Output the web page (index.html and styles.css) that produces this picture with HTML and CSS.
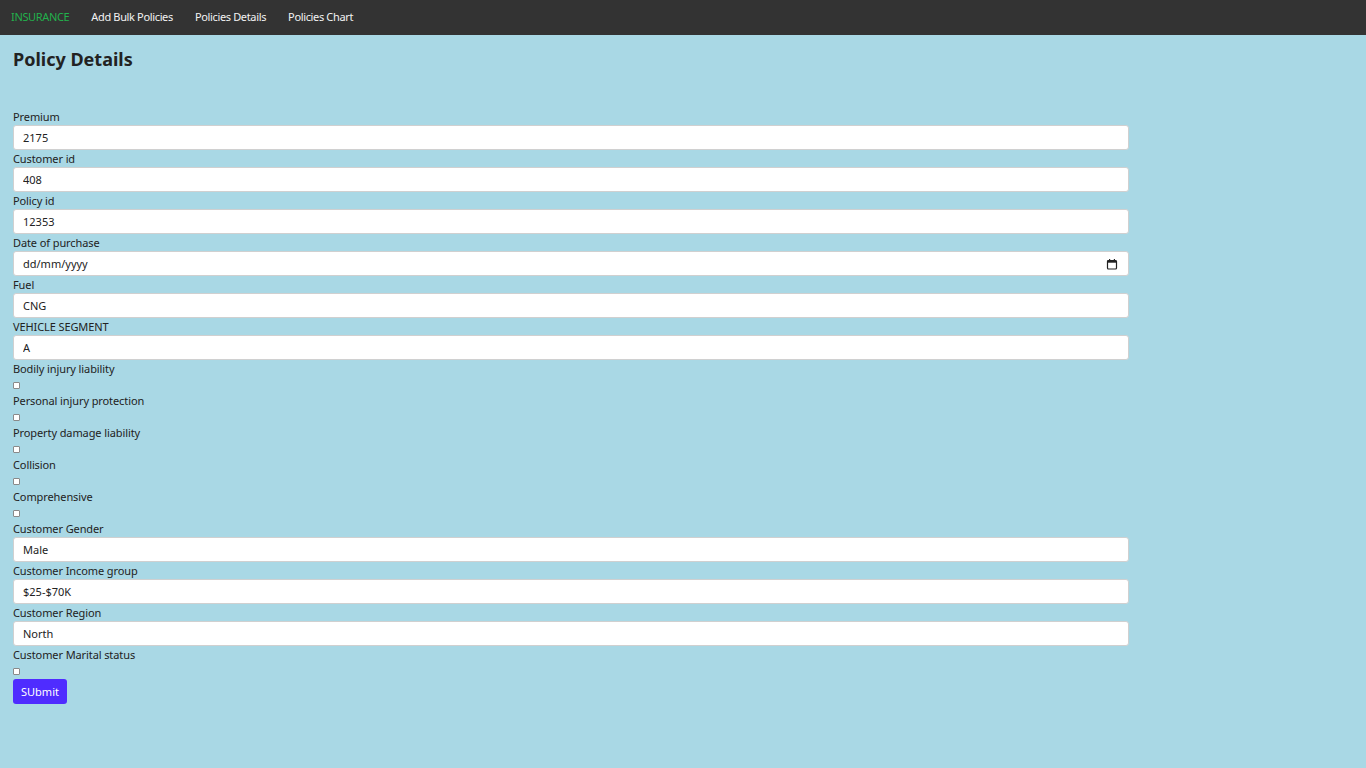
FILE: index.html
```html
<!DOCTYPE html>
<html>
<head>
<meta charset="utf-8">
<title>Policy Details</title>
<link rel="stylesheet" href="styles.css">
</head>
<body>
<nav class="navbar">
  <a class="brand" href="#">INSURANCE</a>
  <a class="nav-link" href="#">Add Bulk Policies</a>
  <a class="nav-link" href="#">Policies Details</a>
  <a class="nav-link" href="#">Policies Chart</a>
</nav>
<main class="page">
  <h1 class="title">Policy Details</h1>
  <form class="form">
    <div class="group"><label>Premium</label><input class="field" type="text" value="2175"></div>
    <div class="group"><label>Customer id</label><input class="field" type="text" value="408"></div>
    <div class="group"><label>Policy id</label><input class="field" type="text" value="12353"></div>
    <div class="group"><label>Date of purchase</label>
      <div class="field date"><span>dd/mm/yyyy</span>
        <svg width="12" height="12" viewBox="0 0 12 12"><rect x="1.5" y="2.5" width="9" height="8.5" rx="1" fill="none" stroke="#222" stroke-width="1.2"/><rect x="1.5" y="2.5" width="9" height="2.2" fill="#222"/><rect x="3" y="1" width="1.2" height="2" fill="#222"/><rect x="7.8" y="1" width="1.2" height="2" fill="#222"/></svg>
      </div>
    </div>
    <div class="group"><label>Fuel</label><input class="field" type="text" value="CNG"></div>
    <div class="group"><label>VEHICLE SEGMENT</label><input class="field" type="text" value="A"></div>
    <div class="group check"><label>Bodily injury liability</label><span class="box"></span></div>
    <div class="group check"><label>Personal injury protection</label><span class="box"></span></div>
    <div class="group check"><label>Property damage liability</label><span class="box"></span></div>
    <div class="group check"><label>Collision</label><span class="box"></span></div>
    <div class="group check"><label>Comprehensive</label><span class="box"></span></div>
    <div class="group"><label>Customer Gender</label><input class="field" type="text" value="Male"></div>
    <div class="group"><label>Customer Income group</label><input class="field" type="text" value="$25-$70K"></div>
    <div class="group"><label>Customer Region</label><input class="field" type="text" value="North"></div>
    <div class="group check"><label>Customer Marital status</label><span class="box"></span></div>
    <button class="submit" type="button">SUbmit</button>
  </form>
</main>
</body>
</html>
```
FILE: styles.css
```css
* { box-sizing: border-box; }
html, body { margin: 0; padding: 0; }
body {
  background: #a9d8e5;
  font-family: "Noto Sans", "Open Sans", sans-serif;
  color: #222;
  min-height: 768px;
}
.navbar {
  height: 35px;
  background: #333333;
  display: flex;
  align-items: center;
  padding-left: 11px;
  padding-bottom: 2px;
  gap: 22px;
}
.navbar a {
  text-decoration: none;
  font-size: 11px;
  color: #f2f2f2;
  letter-spacing: -0.35px;
}
.navbar .brand { color: #22b14c; }
.page { padding: 0 13px; }
.title {
  margin: 0;
  padding-top: 12px;
  font-size: 18px;
  font-weight: 700;
  color: #222;
  height: 74px;
  line-height: 24px;
}
.form { width: 1116px; display: flex; flex-direction: column; }
.group { display: flex; flex-direction: column; }
.group label {
  font-size: 11px;
  line-height: 16px;
  height: 16px;
  color: #222;
  letter-spacing: -0.1px;
}
.field {
  height: 25px;
  margin-bottom: 1px;
  border: 1px solid #d0d0d0;
  border-radius: 3px;
  background: #fff;
  padding: 0 9px;
  font-family: inherit;
  font-size: 11px;
  color: #222;
  outline: none;
}
.date { display: flex; align-items: center; justify-content: space-between; padding-right: 10px; }
.check { height: 32px; }
.box {
  display: block;
  width: 7px;
  height: 7px;
  margin-top: 5px;
  border: 1px solid #8a8a8a;
  background: #fff;
  border-radius: 1px;
}
.submit {
  align-self: flex-start;
  margin-top: 0;
  width: 54px;
  height: 25px;
  border: none;
  border-radius: 3px;
  background: #4f2cff;
  color: #fff;
  font-family: inherit;
  font-size: 11px;
  padding: 0;
}
```
